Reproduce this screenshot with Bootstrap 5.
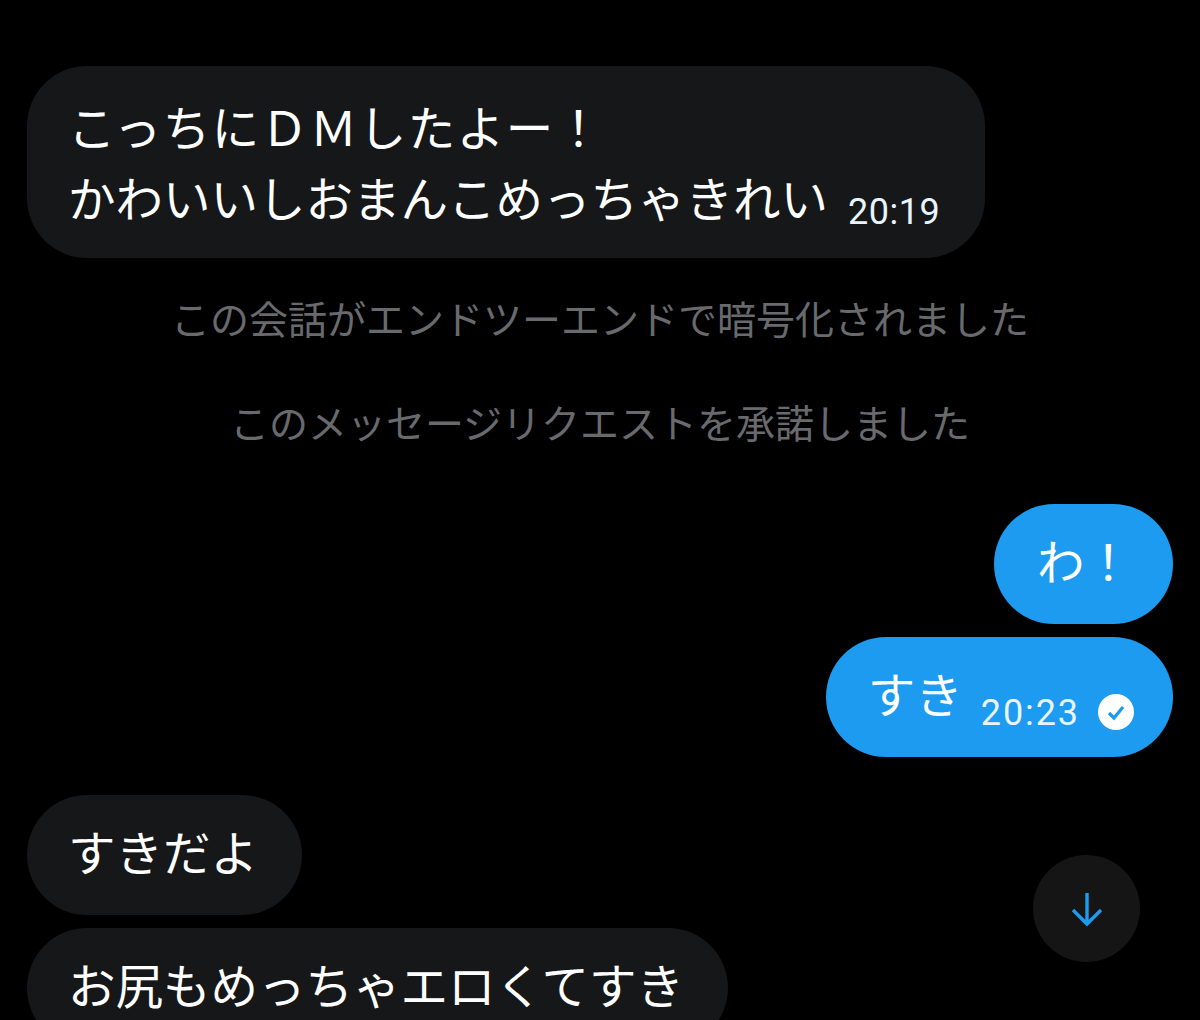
<!DOCTYPE html>
<html lang="ja">
<head>
  <meta charset="UTF-8">
  <meta name="viewport" content="width=device-width, initial-scale=1.0">
  <title>DM</title>
  <link href="https://cdn.jsdelivr.net/npm/bootstrap@5.3.2/dist/css/bootstrap.min.css" rel="stylesheet">
  <style>
    html, body {
      height: 1020px;
      overflow: hidden;
    }
    body {
      background: #000;
      color: #fff;
      font-family: "Liberation Sans", "Noto Sans CJK JP", sans-serif;
    }
    .chat-wrap {
      position: relative;
      height: 1020px;
      overflow: hidden;
      padding: 66px 27px 0;
    }
    .bubble {
      border-radius: 60px;
      font-size: 47.5px;
      line-height: 70px;
      padding: 25px 44px 25px 41px;
      white-space: nowrap;
    }
    .bubble-in { background: #161719; }
    .bubble-out {
      background: #1d9bf0;
      padding-left: 43px;
      padding-right: 41px;
    }
    .bubble-first {
      line-height: 71px;
      padding: 28px 45px 22px 41px;
    }
    .first-line { letter-spacing: 1.5px; }
    .bubble-time {
      padding-left: 42px;
      padding-right: 38px;
    }
    .time-label {
      font-family: "Roboto", sans-serif;
      font-size: 36px;
      line-height: 1;
      letter-spacing: 0.5px;
      color: #e8f4fd;
    }
    .time-first { margin: 0 0 6px 20px; }
    .time-sent {
      letter-spacing: 1.9px;
      margin: 0 17px 1px 18px;
    }
    .check-icon { margin-bottom: 1px; }
    .sys-line {
      font-size: 39px;
      line-height: 50px;
      color: #686a6d;
      text-align: center;
      white-space: nowrap;
    }
    .gap-sys-top { margin-top: 38px; }
    .gap-wide { margin-top: 54px; }
    .gap-row { margin-top: 13px; }
    .gap-turn { margin-top: 38px; }
    .scroll-btn {
      position: absolute;
      left: 1033px;
      top: 855px;
      width: 107px;
      height: 107px;
      background: #151515;
    }
  </style>
</head>
<body>
  <div class="chat-wrap d-flex flex-column">
    <div class="bubble bubble-first bubble-in align-self-start">
      <div class="first-line">こっちにＤＭしたよー！</div>
      <div class="d-flex align-items-end">
        <span>かわいいしおまんこめっちゃきれい</span>
        <span class="time-label time-first">20:19</span>
      </div>
    </div>

    <div class="sys-line gap-sys-top">この会話がエンドツーエンドで暗号化されました</div>
    <div class="sys-line gap-wide">このメッセージリクエストを承諾しました</div>

    <div class="bubble bubble-out align-self-end gap-wide">わ！</div>
    <div class="bubble bubble-out bubble-time align-self-end d-flex align-items-end gap-row">
      <span>すき</span>
      <span class="time-label time-sent">20:23</span>
      <svg class="check-icon" width="38" height="38" viewBox="0 0 38 38">
        <circle cx="19" cy="19" r="18" fill="#fff"/>
        <path d="M12 20l5 5 9-11" fill="none" stroke="#1d9bf0" stroke-width="3.2"/>
      </svg>
    </div>

    <div class="bubble bubble-in align-self-start gap-turn">すきだよ</div>
    <div class="bubble bubble-in align-self-start gap-row">お尻もめっちゃエロくてすき</div>

    <div class="scroll-btn rounded-circle d-flex align-items-center justify-content-center">
      <svg width="34" height="38" viewBox="0 0 34 38" fill="none" stroke="#1d9bf0" stroke-width="3.4">
        <path d="M17 3v31M3 20l14 14 14-14"/>
      </svg>
    </div>
  </div>
  <script src="https://cdn.jsdelivr.net/npm/bootstrap@5.3.2/dist/js/bootstrap.bundle.min.js"></script>
</body>
</html>
